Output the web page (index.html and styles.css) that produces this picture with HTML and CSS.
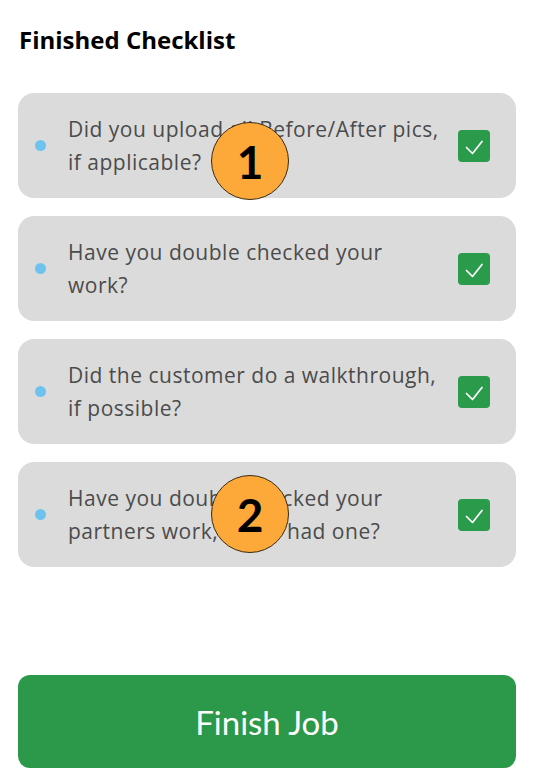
FILE: index.html
```html
<!DOCTYPE html>
<html lang="en">
<head>
<meta charset="utf-8">
<title>Finished Checklist</title>
<link rel="stylesheet" href="styles.css">
</head>
<body>
<main class="page">
  <h1 class="title">Finished Checklist</h1>
  <ul class="list">
    <li class="item">
      <span class="dot"></span>
      <span class="text">Did you upload all Before/After pics,<br>if applicable?</span>
      <span class="check"><svg viewBox="0 0 32 32" width="32" height="32"><path d="M8.5 17.5l6 6 9.5-12" fill="none" stroke="#fff" stroke-width="1.7" stroke-linecap="round" stroke-linejoin="round"/></svg></span>
      <span class="badge badge-1">1</span>
    </li>
    <li class="item">
      <span class="dot"></span>
      <span class="text">Have you double checked your<br>work?</span>
      <span class="check"><svg viewBox="0 0 32 32" width="32" height="32"><path d="M8.5 17.5l6 6 9.5-12" fill="none" stroke="#fff" stroke-width="1.7" stroke-linecap="round" stroke-linejoin="round"/></svg></span>
    </li>
    <li class="item">
      <span class="dot"></span>
      <span class="text">Did the customer do a walkthrough,<br>if possible?</span>
      <span class="check"><svg viewBox="0 0 32 32" width="32" height="32"><path d="M8.5 17.5l6 6 9.5-12" fill="none" stroke="#fff" stroke-width="1.7" stroke-linecap="round" stroke-linejoin="round"/></svg></span>
    </li>
    <li class="item">
      <span class="dot"></span>
      <span class="text">Have you double checked your<br>partners work, if you had one?</span>
      <span class="check"><svg viewBox="0 0 32 32" width="32" height="32"><path d="M8.5 17.5l6 6 9.5-12" fill="none" stroke="#fff" stroke-width="1.7" stroke-linecap="round" stroke-linejoin="round"/></svg></span>
      <span class="badge badge-2">2</span>
    </li>
  </ul>
  <button class="finish">Finish Job</button>
</main>
</body>
</html>
```

FILE: styles.css
```css
html, body {
  margin: 0;
  padding: 0;
  background: #ffffff;
}
body {
  font-family: "Open Sans", "Lato", sans-serif;
  width: 536px;
  height: 778px;
  overflow: hidden;
}
.page {
  padding: 0 20px 0 18px;
  display: flex;
  flex-direction: column;
}
.title {
  margin: 26px 0 0 1px;
  font-size: 24px;
  line-height: 28px;
  font-weight: 700;
  color: #000;
}
.list {
  list-style: none;
  margin: 39px 0 0 0;
  padding: 0;
  display: flex;
  flex-direction: column;
  gap: 18px;
}
.item {
  position: relative;
  height: 105px;
  box-sizing: border-box;
  background: #dbdbdb;
  border-radius: 16px;
  display: flex;
  align-items: center;
  padding: 0 26px 0 17px;
}
.dot {
  flex: none;
  width: 11px;
  height: 11px;
  border-radius: 50%;
  background: #6ec3ee;
  margin-right: 22px;
}
.text {
  flex: 1;
  font-size: 21px;
  line-height: 33px;
  font-weight: 500;
  letter-spacing: 0.5px;
  color: #4b4b4b;
  white-space: nowrap;
  padding-right: 8px;
}
.check {
  flex: none;
  width: 32px;
  height: 32px;
  border-radius: 4px;
  background: #2a9a4b;
  display: block;
}
.check svg {
  display: block;
}
.badge {
  position: absolute;
  left: 193px;
  width: 78px;
  height: 78px;
  box-sizing: border-box;
  border: 1px solid #3a2a10;
  border-radius: 50%;
  background: #fca93a;
  color: #000;
  font-family: "Lato", sans-serif;
  font-size: 46px;
  font-weight: 700;
  display: flex;
  align-items: center;
  justify-content: center;
}
.badge-1 { top: 29px; }
.badge-2 { top: 13px; }
.finish {
  margin-top: 108px;
  height: 93px;
  border: none;
  border-radius: 12px;
  background: #2b984a;
  color: #fff;
  font-family: "Lato", sans-serif;
  font-size: 33px;
  font-weight: 400;
  width: 100%;
}
```
